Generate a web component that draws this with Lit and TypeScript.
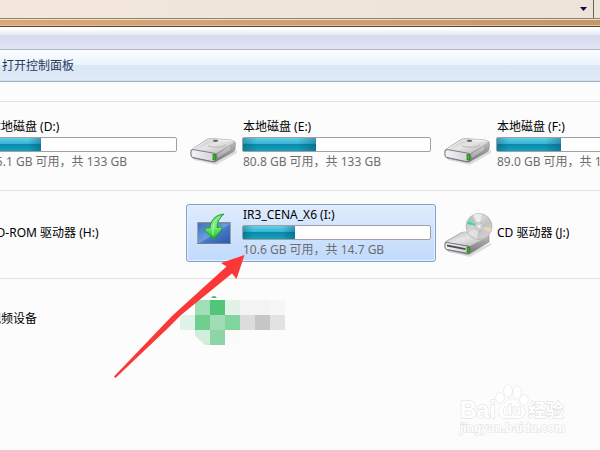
import { LitElement, html, css, svg, nothing } from "lit";
import { customElement, property } from "lit/decorators.js";

type IconKind = "disk" | "removable" | "cd";

interface Drive {
  name: string;
  icon?: IconKind;
  used?: number;
  detail?: string;
  selected?: boolean;
}

const DISKS: Drive[] = [
  { name: "本地磁盘 (D:)", icon: "disk", used: 28, detail: "95.1 GB 可用，共 133 GB" },
  { name: "本地磁盘 (E:)", icon: "disk", used: 39, detail: "80.8 GB 可用，共 133 GB" },
  { name: "本地磁盘 (F:)", icon: "disk", used: 34, detail: "89.0 GB 可用，共 133 GB" },
];

const REMOVABLE: Drive[] = [
  { name: "CD-ROM 驱动器 (H:)", icon: "cd" },
  { name: "IR3_CENA_X6 (I:)", icon: "removable", used: 28, detail: "10.6 GB 可用，共 14.7 GB", selected: true },
  { name: "CD 驱动器 (J:)", icon: "cd" },
];

const gradients = svg`
  <defs>
    <linearGradient id="top" x1="0" y1="0" x2="1" y2="1">
      <stop offset="0" stop-color="#b4b4b4"/><stop offset=".45" stop-color="#e6e6e6"/><stop offset="1" stop-color="#b2b2b2"/>
    </linearGradient>
    <linearGradient id="side" x1="0" y1="0" x2="0" y2="1">
      <stop offset="0" stop-color="#c8c8c8"/><stop offset="1" stop-color="#747474"/>
    </linearGradient>
    <linearGradient id="face" x1="0" y1="0" x2="1" y2="0">
      <stop offset="0" stop-color="#f4f4f6"/><stop offset="1" stop-color="#cfd0d8"/>
    </linearGradient>
    <linearGradient id="disc" x1="0" y1="0" x2="1" y2="1">
      <stop offset="0" stop-color="#b6b6b6"/><stop offset=".4" stop-color="#d6d6d6"/><stop offset=".6" stop-color="#c2c2c2"/><stop offset="1" stop-color="#dcdcdc"/>
    </linearGradient>
    <linearGradient id="screen" x1="0" y1="0" x2="1" y2="1">
      <stop offset="0" stop-color="#3a6cb8"/><stop offset=".5" stop-color="#6d9ede"/><stop offset=".55" stop-color="#4779c8"/><stop offset="1" stop-color="#2d58a8"/>
    </linearGradient>
    <linearGradient id="leaf" x1="0" y1="0" x2="0" y2="1">
      <stop offset="0" stop-color="#58d468"/><stop offset=".5" stop-color="#7df27c"/><stop offset="1" stop-color="#18b828"/>
    </linearGradient>
  </defs>`;

const icons = {
  disk: svg`
    <path d="M5 38 L29 45 L51 33 L51 36 L30 48 L8 43Z" fill="#000" opacity=".12"/>
    <path d="M5 33 L20 23 Q22 21.500 26 21.500 L45 23 Q50 24 49.500 27 L49 32 Q49 34 47 35 L31 44 Q29 46 26 45 L7 41 Q5 40 5 38Z" fill="url(#side)" stroke="#8c8c8c" stroke-width=".6"/>
    <path d="M6 32.500 L21 23 Q23 21.500 26 21.500 L45 23 Q50 24 47 26 L29 37Z" fill="url(#top)"/>
    <path d="M7 32.500 L22 23 L45 24" fill="none" stroke="#f6f6f6" stroke-width=".8"/>
    <path d="M22 29 Q34 32 40 28" fill="none" stroke="#a6a6a6" stroke-width=".7"/>
    <ellipse cx="29.500" cy="23.800" rx="2.800" ry="1.100" fill="#666"/>
    <path d="M7 32.500 L27 36 Q30 36 30 38 L30 43 Q29 45 26 44.500 L7 40.500 Q5 40 5 38 L5 34Z" fill="url(#face)" stroke="#747474" stroke-width=".9"/>
    <path d="M31 37 L44 29 L44 33 L32 41Z" fill="#fff" opacity=".3"/>
    <rect x="27" y="37.500" width="2.500" height="5.500" fill="#2cc512" stroke="#287018" stroke-width=".7"/>`,
  cd: svg`
    <path d="M6 43 L29 48 L51 38 L51 40 L30 52 L8 47Z" fill="#000" opacity=".12"/>
    <path d="M5 37 L19 29 Q21 27 25 27 L46 29 Q50 30 49 32 L49 37 L31 48 Q29 50 26 49 L7 45 Q5 44 5 42Z" fill="url(#side)" stroke="#8c8c8c" stroke-width=".6"/>
    <path d="M6 37 L20 29 Q22 27 25 27 L46 29 Q50 30 47 32 L30 41Z" fill="url(#top)"/>
    <circle cx="39" cy="21.500" r="13" fill="url(#disc)" stroke="#adadad" stroke-width=".7"/>
    <path d="M39 21.500 L27 19 Q28 17 29 16Z" fill="#3fd69b"/>
    <path d="M39 21.500 L29 16 Q30 13 31 12Z" fill="#9fc9cd"/>
    <path d="M39 21.500 L33 10 Q37 8 42 9Z" fill="#f2f2f2" opacity=".8"/>
    <path d="M39 21.500 L51 23 Q51 25 50 27Z" fill="#e9e0a0"/>
    <path d="M39 21.500 L50 27 Q49 29 47 30Z" fill="#e0bfd4"/>
    <path d="M39 21.500 L37 34 Q31 32 28 28Z" fill="#eeeeee" opacity=".65"/>
    <circle cx="39" cy="21.500" r="4" fill="#d7dade" stroke="#a9abad" stroke-width=".7"/>
    <circle cx="39" cy="21.500" r="1.700" fill="#fff" stroke="#aaa" stroke-width=".5"/>
    <path d="M7 37.500 L27 41 Q30 41 30 43 L30 46 Q29 48.500 26 48 L7 44.500 Q5 44 5 42 L5 39Z" fill="url(#face)" stroke="#747474" stroke-width=".9"/>
    <path d="M7 39.500 L25.500 43.200 L25.500 45 L7 41.500Z" fill="#4c4c50"/>
    <rect x="27" y="42" width="2.500" height="5" fill="#2cc512" stroke="#287018" stroke-width=".7"/>`,
  removable: svg`
    <rect x="11.500" y="17.500" width="33" height="21" fill="url(#screen)" stroke="#9aa4b0"/>
    <path d="M12 18 H44" stroke="#6e7c8c"/>
    <path d="M11 38.500 H45" stroke="#77818c"/>
    <path d="M38 9 Q29 10 26 16 Q24 20 24 23 L20 23 Q18 23 19 25 L26 33 Q27.500 34 29 33 L36 24 Q37 22 35 22 L31 22.500 Q31 15 38 9Z" fill="url(#leaf)" stroke="#179c2c" stroke-width=".9"/>
    <path d="M34 11.500 Q27 15 27 24 L27 30" fill="none" stroke="#b5fbab" stroke-width="1"/>`,
};

@customElement("drive-tile")
class DriveTile extends LitElement {
  @property({ attribute: false }) drive!: Drive;

  static styles = css`
    :host { display: block; min-width: 0; }
    .tile {
      display: flex;
      align-items: center;
      box-sizing: border-box;
      width: 100%;
      height: 58px;
      padding: 0 4px 0 0;
      margin: 0;
      border: 1px solid transparent;
      border-radius: 3px;
      background: none;
      color: #000;
      font: 12px/16px "Noto Sans", "Noto Sans CJK SC", sans-serif;
      text-align: left;
      white-space: nowrap;
    }
    .selected {
      border-color: #7da2ce;
      background: linear-gradient(#dfebfc, #c1dbfc);
      box-shadow: inset 0 0 0 1px #e6f0fd;
    }
    .icon { flex: none; width: 55px; height: 56px; }
    .info { display: flex; flex-direction: column; flex: 1; min-width: 0; padding-bottom: 1px; }
    .name, .detail { padding-left: 1px; }
    .detail { color: #6d6d6d; }
    .bar {
      box-sizing: border-box;
      height: 15px;
      margin: 2px 0;
      border: 1px solid #a0a0a0;
      border-radius: 2px;
      background: #fff;
    }
    .fill {
      height: 100%;
      background:
        linear-gradient(90deg, rgba(0, 60, 90, .3), transparent 20%, transparent 75%, rgba(0, 60, 90, .35)),
        linear-gradient(#62cfe8, #35b4d4 45%, #0b8bab 50%, #14a0bd);
    }
  `;

  render() {
    const d = this.drive;
    return html`
      <button class="tile ${d.selected ? "selected" : ""}">
        <svg class="icon" viewBox="1 0 55 56" aria-hidden="true">${gradients}${d.icon ? icons[d.icon] : nothing}</svg>
        <span class="info">
          <span class="name">${d.name}</span>
          ${d.detail
            ? html`<div class="bar"><div class="fill" style="width:${d.used}%"></div></div>
                <span class="detail">${d.detail}</span>`
            : nothing}
        </span>
      </button>`;
  }
}

const MOSAIC: [number, number, string][] = [
  [1, 0, "#a0dfb6"], [2, 0, "#53c578"], [3, 0, "#e1f3e8"], [4, 0, "#f3f3f3"], [5, 0, "#f3f3f3"], [6, 0, "#f6f6f6"],
  [0, 1, "#e1f3e8"], [1, 1, "#6fcf90"], [2, 1, "#a0dcb5"], [3, 1, "#82d49f"], [4, 1, "#dcdcdc"], [5, 1, "#c8c6c4"], [6, 1, "#e1e2e4"],
  [2, 2, "#8dd5a6"], [3, 2, "#fafafa"],
];

@customElement("app-root")
class AppRoot extends LitElement {
  static styles = css`
    :host {
      display: block;
      position: relative;
      min-height: 100vh;
      overflow: hidden;
      background: #fcfcfc;
      color: #000;
      font: 12px/16px "Noto Sans", "Noto Sans CJK SC", sans-serif;
    }
    .strip {
      display: flex;
      justify-content: flex-end;
      height: 18px;
      background: linear-gradient(90deg, #f3e7dc, #ede3d8);
    }
    .drop {
      display: flex;
      align-items: center;
      justify-content: center;
      width: 20px;
      padding: 0;
      border: 0;
      border-right: 1px solid #6b6258;
      background: none;
    }
    .edge { width: 6px; }
    .frame {
      height: 6px;
      border-top: 1px solid #8f8377;
      border-bottom: 1px solid #5c4434;
      box-shadow: inset 0 1px #f3dcc4, inset 0 -1px #e5c19c;
      background: linear-gradient(90deg, #d8a878, #c4976a);
      padding-top: 1px;
    }
    .menu {
      height: 22px;
      border-bottom: 1px solid #b4b8cc;
      background: linear-gradient(#fff 2px, #f3f5fa 4px, #e7eaf5 8px, #d5d9ec 8px, #e1e6f6);
    }
    .toolbar {
      display: flex;
      align-items: center;
      height: 31px;
      border-bottom: 1px solid #a0afc3;
      background: linear-gradient(#fcfeff, #e9f3fc 15px, #dce6f4 15px, #dde9f7 28px, #e4effb 29px, #c9dcef);
    }
    .action { margin: 0; padding: 0 2px; border: 0; background: none; color: #1e395b; font: inherit; }
    .group { border-top: 1px solid #e0e0e0; }
    .group:first-child { margin-top: 19px; }
    .tiles {
      display: grid;
      grid-template-columns: repeat(3, 250px);
      column-gap: 4px;
      margin-left: -68px;
      padding: 14px 0 16px;
    }
    .group + .group .tiles { padding: 13px 0 16px; }
    .group + .group + .group .tiles { padding: 11px 0; }
    .mosaic { display: block; width: 105px; height: 58px; overflow: visible; }
    .arrow { position: absolute; left: 110px; top: 250px; width: 140px; height: 132px; }
    .watermark { position: absolute; right: 20px; bottom: 12px; width: 122px; height: 54px; overflow: visible; }
    .mark { fill: #fff; stroke: #dcdcdc; stroke-width: 1px; paint-order: stroke; }
    .logo { font: bold 23px "Liberation Sans", sans-serif; }
    .du { font: bold 15px "Liberation Sans", sans-serif; }
    .cn { font: bold 18px "Noto Sans CJK SC", sans-serif; }
    .site { font: bold 12px "Liberation Sans", sans-serif; }
  `;

  private group(drives: Drive[]) {
    return html`<section class="group"><div class="tiles">
      ${drives.map((d) => html`<drive-tile .drive=${d}></drive-tile>`)}
    </div></section>`;
  }

  render() {
    return html`
      <div class="strip">
        <button class="drop" aria-label="展开">
          <svg width="9" height="6" viewBox="0 0 9 6"><path d="M1 1H8L4.500 5Z" fill="#080850"/></svg>
        </button>
        <div class="edge"></div>
      </div>
      <div class="frame"></div>
      <div class="menu"></div>
      <nav class="toolbar"><button class="action">打开控制面板</button></nav>
      <main>
        ${this.group(DISKS)} ${this.group(REMOVABLE)}
        <section class="group"><div class="tiles">
          <drive-tile .drive=${{ name: "视频设备" }}></drive-tile>
          <svg class="mosaic" viewBox="0 0 105 58" aria-hidden="true">
            <g shape-rendering="crispEdges">
              ${MOSAIC.map(([c, r, fill]) => svg`<rect x=${c * 15 - 6} y=${r * 15 + 10} width="15" height="15" fill=${fill}></rect>`)}
            </g>
            <path d="M9 40H24V55H19L9 46Z" fill="#d1eedc"/>
            <path d="M25 8Q28 4 31 8Z" fill="#34bb60"/>
          </svg>
        </div></section>
      </main>
      <svg class="arrow" viewBox="0 0 140 132" aria-hidden="true">
        <path d="M134.500 5 L111 13 L116.500 16.500 L62 66 L4 126.500 L5.500 128 L56 80 L71 65 L122 23.500 L126.500 29Z" fill="#fb3838"/>
      </svg>
      <svg class="watermark" viewBox="0 0 122 54" role="img" aria-label="Baidu 经验">
        <text class="mark logo" x="2" y="34">Bai</text>
        <g class="mark">
          <ellipse cx="42" cy="14" rx="4" ry="5"/>
          <ellipse cx="50" cy="7" rx="4" ry="6"/>
          <ellipse cx="59" cy="8" rx="4" ry="6"/>
          <ellipse cx="66" cy="16" rx="4" ry="5"/>
          <path d="M54 15Q57 15 60 19Q68 25 67 29Q66 35 58 34H48Q41 35 41 28Q41 24 47 19Q50 15 54 15Z"/>
        </g>
        <text class="mark du" x="45" y="31">du</text>
        <text class="mark cn" x="70" y="33">经验</text>
        <text class="mark site" x="2" y="48">jingyan.baidu.com</text>
      </svg>`;
  }
}
